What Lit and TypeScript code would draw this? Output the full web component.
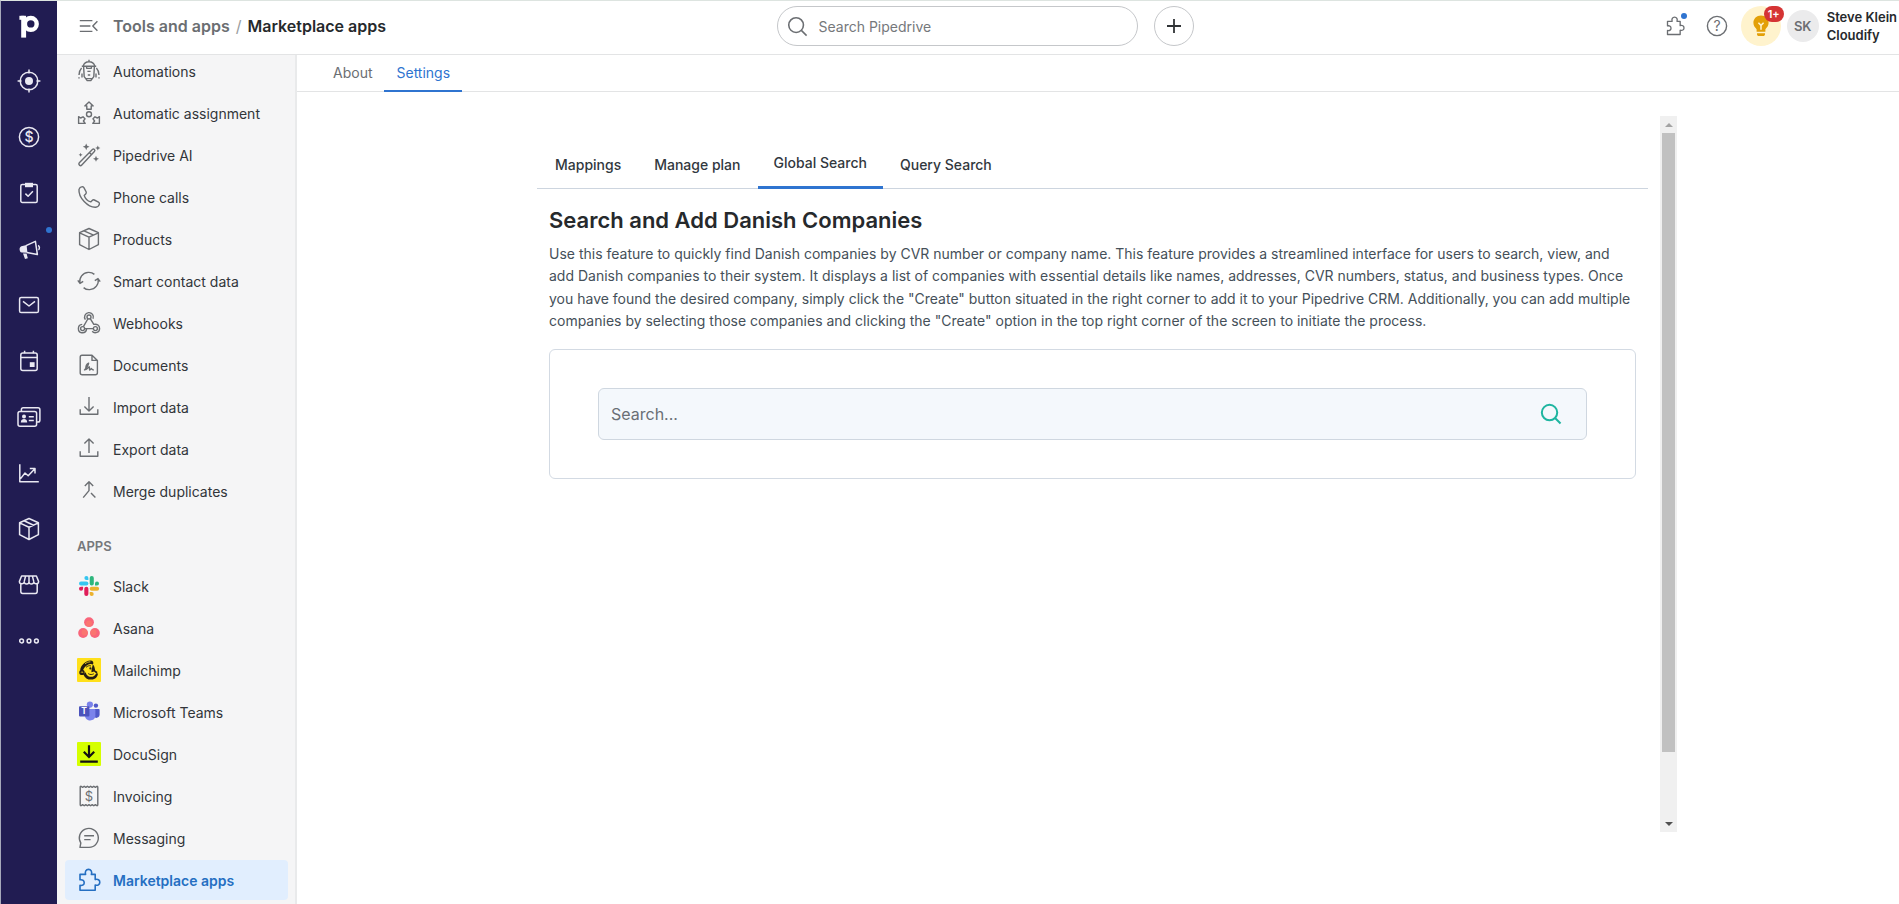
import { LitElement, html, svg, css, SVGTemplateResult } from "lit";
import { customElement, property } from "lit/decorators.js";
import { classMap } from "lit/directives/class-map.js";

const icons: Record<string, SVGTemplateResult> = {
  // left rail
  logo: svg`<rect x="4.200" y=".8" width="4.900" height="21.800"/><rect x="2.400" y=".8" width="5" height="4"/>
    <circle cx="13.800" cy="8.900" r="5.900" fill="none" stroke="currentColor" stroke-width="4.400"/>`,
  target: svg`<g class="s"><circle cx="12" cy="12" r="8.800"/><path d="M12 .6v4M12 19.400v4M.6 12h4M19.400 12h4"/></g><circle cx="12" cy="12" r="4"/>`,
  deal: svg`<circle class="s" cx="12" cy="12" r="9.600"/><text x="12" y="17" font-size="14" font-weight="500" text-anchor="middle">$</text>`,
  clipboard: svg`<g class="s"><rect x="3.800" y="3.400" width="16.400" height="18" rx="1.500"/><path d="M8.400 12.600l2.700 2.600 4.800-5"/></g><path d="M8 1.800h8v4.400H8z"/>`,
  megaphone: svg`<g class="s"><path d="M9 8.600L18.400 4.400l2 13.200L9.800 15.600"/><path d="M21 8.400c1.600.4 2 3.600.4 4.400"/></g><path d="M9.600 8L4.400 9.200C1.800 10 2 15 4.800 15.600l5.600.2zM6 16.400l3.600.2 1.200 4.600-2.800.8z"/>`,
  mail: svg`<g class="s"><rect x="2.600" y="4.400" width="18.800" height="15.200" rx="1.600"/><path d="M6 8.400l6 4.600 6-4.600"/></g>`,
  calendar: svg`<g class="s"><rect x="3.800" y="4" width="16.400" height="17.400" rx="2"/><path d="M4 8.600h16M7.600 1.800v2.400M16.400 1.800v2.400"/></g><rect x="12.800" y="13.200" width="4.800" height="4.800"/>`,
  contacts: svg`<g class="s"><rect x="1" y="6.400" width="18.600" height="14.800" rx="2"/><path d="M4.400 6V4.600c0-1.200.6-1.800 1.800-1.800H21c1.200 0 1.900.7 1.900 1.900v10.600c0 1.200-.7 1.800-1.900 1.800h-1M11.800 11.800h5M11.800 15.400h5"/></g><circle cx="7" cy="11.400" r="2"/><path d="M3.800 17.400c0-4.400 6.400-4.400 6.400 0z"/>`,
  chart: svg`<g class="s"><path d="M2.800 3.200v17.600h19M3.600 17.600l4.400-5.600 3.200 2.800 6.400-6.800M12.800 7.600h5.200v5"/></g>`,
  cube: svg`<g class="s"><path d="M12 1.500l9.400 4.200v12L12 22.500 2.600 17.700v-12zM2.600 5.900l9.400 4.300 9.400-4.300M12 10.200v12.300M7 3.800l9.600 4.400"/></g>`,
  store: svg`<g class="s"><path d="M4.600 3h14.800l2.200 5.400c0 3.200-4.600 3.200-4.800.4-.2 3-4.800 3-4.800 0 0 3-4.600 3-4.800 0-.2 2.800-4.800 2.800-4.800-.4zM3.800 11.200v7.400c0 1 .8 1.800 1.800 1.800h12.800c1 0 1.800-.8 1.800-1.800v-7.400M7.200 8.600L8.600 3M12 8.600V3M16.800 8.600L15.400 3"/></g>`,
  more: svg`<g class="s"><circle cx="4.600" cy="12" r="1.900"/><circle cx="12" cy="12" r="1.900"/><circle cx="19.400" cy="12" r="1.900"/></g>`,
  // settings menu
  robot: svg`<g class="s"><path d="M4.800 7.200h14.400M6.200 7C7 4.200 9 2.800 12 2.800S17 4.200 17.800 7M12 .8v2M6.600 7.400l.6 10.200 3 4h3.600l3-4 .6-10.200M9.400 7.400l.4 2h4.400l.4-2M10.400 12.400h3.200M10.800 16h2.400M9 19.600h6M4.600 9c-1.600 1.600-2.400 4-2.600 7M19.400 9c1.600 1.600 2.400 4 2.600 7M2 18.200v1.200M22 18.200v1.200M5 14.400v4M19 14.400v4"/></g>`,
  assign: svg`<g class="s"><circle cx="12" cy="13.200" r="2.500"/><path d="M12 .9l4.200 4h-2v3.300H9.800V4.900h-2zM1.600 15.600l2 1.400 2.400-1.200 2 2-1.600 2.200 1.800 2.400H1.600zM22.400 15.600l-2 1.400-2.400-1.200-2 2 1.600 2.200-1.800 2.400h6.600z"/></g>`,
  wand: svg`<g class="s"><path d="M15.400 6.600a1.400 1.400 0 0 1 2 2L4.800 22a1.600 1.600 0 0 1-2.500-2.200zM12.400 9.600l2.200 2.200"/></g><path d="M9.200.4l1 2.400 2.400 1-2.400 1-1 2.400-1-2.400-2.400-1 2.400-1zM20.800 2.400l.8 1.800 1.800.8-1.800.8-.8 1.800-.8-1.800-1.800-.8 1.800-.8zM19 12.800l.9 2.100 2.100.9-2.100.9-.9 2.100-.9-2.100-2.100-.9 2.100-.9zM3.600 9.800l.6 1.400 1.400.6-1.400.6-.6 1.400-.6-1.400-1.400-.6 1.400-.6z"/>`,
  phone: svg`<path class="s" d="M2 4.400c.4-1.600 1.800-2.600 3.300-2.800.8 0 1.200.4 1.600 1l2.200 4.200c.4.800.2 1.500-.4 2.100l-1.500 1.500c.8 2.800 3.700 5.700 6.500 6.500l1.500-1.500c.6-.6 1.300-.8 2.100-.4l4.200 2.200c.7.4 1.100 1 .9 1.900-.5 1.700-1.900 3-3.700 3.200C11 22.700 1.200 12.600 2 4.400z"/>`,
  refresh: svg`<g class="s"><path d="M2.800 14.200c-.8-5.600 2.800-10.400 8.400-10.800 2.600-.2 4.600.6 6.200 2M.8 11.400l2.200 3 3.200-2M21.200 9.800c.8 5.600-2.800 10.400-8.400 10.800-2.600.2-4.600-.6-6.200-2M23.200 12.600l-2.200-3-3.200 2"/></g>`,
  webhook: svg`<g class="s"><circle cx="12" cy="6" r="2"/><circle cx="5.600" cy="17.600" r="2"/><circle cx="18.400" cy="17.600" r="2"/><path d="M8.400 8.600A4.400 4.400 0 1 1 16 7.800M10.800 8L6.400 15.600M13.400 7.800l3.400 5.600c3.400-.8 5.800 1.200 5.800 4 0 4-5 5.800-7.400 2.800M16 17.600H7.800M5.200 13.400c-5 .4-5 7.600-.4 8.300 2.400.3 4.300-1 4.800-3.700"/></g>`,
  document: svg`<g class="s"><path d="M5 2.200h10l5.400 5.200v12.400c0 1.200-.8 2-2 2H5.200c-1.200 0-2-.8-2-2V4.200c0-1.200.6-2 1.800-2zM15 2.400v5h5.200M7.200 17.400c2.400-2.600 4-4.400 4.400-7.200-1.800.8-3 3.400-2.800 6.400 1.400-.4 2.200-1.800 3.400-2.800.6 1 .2 2 .4 3.200.8-.2 1.200-.8 1.800-1.400.6.800 1.200 1.400 2.400 1.400"/></g>`,
  import: svg`<path class="s" d="M12 2v14M7.400 11.600L12 16l4.600-4.400M3.200 14.200v5h17.600v-5"/>`,
  export: svg`<path class="s" d="M12 16V2M7.400 6.400L12 2l4.600 4.400M3.200 14.200v5h17.600v-5"/>`,
  merge: svg`<path class="s" d="M12 3v8.600l-5.800 7M7.800 7L12 2.800 16.200 7M14 14l4.400 4.600"/>`,
  invoice: svg`<path class="s" d="M4 2.200l1.600 1.200L7.200 2.200l1.600 1.200 1.600-1.200L12 3.400l1.600-1.200 1.600 1.200 1.600-1.200 1.600 1.200L20 2.200c.6 0 .8.400.8 1v17.600c0 .6-.2 1-.8 1l-1.600-1.200-1.600 1.200-1.600-1.200-1.600 1.200-1.600-1.200-1.600 1.200-1.600-1.200-1.600 1.200-1.600-1.200L4 21.800c-.6 0-.8-.4-.8-1V3.200c0-.6.2-1 .8-1z"/><text x="12" y="16.600" font-size="13" text-anchor="middle">$</text>`,
  message: svg`<path class="s" d="M3 21.400l.8-4.400A9.500 9.500 0 1 1 12 21.400zM7.200 9.800h9.800M7.200 13.600h6.400"/>`,
  puzzle: svg`<path class="s" d="M3 6.400h5.600c-.9-2.600.4-5 2.900-5s3.800 2.400 2.900 5h3.800v5.200c2.600-.9 4.600.4 4.600 2.700s-2 3.600-4.600 2.700v5.200H3v-4.800c2.800.4 4.200-.8 4.200-2.700S5.800 11.400 3 11.800z"/>`,
  slack: svg`<g fill="#36c5f0"><path d="M9.400 2a2 2 0 1 0 0 4.100h2V4a2 2 0 0 0-2-2z"/><rect x="2" y="7.400" width="9.400" height="4.100" rx="2"/></g>
    <g fill="#2eb67d"><rect x="12.700" y="2" width="4.100" height="9.500" rx="2"/><path d="M22 9.400a2 2 0 1 0-4 0v2.100h2a2 2 0 0 0 2-2.100z"/></g>
    <g fill="#ecb22e"><rect x="12.700" y="12.700" width="9.400" height="4.100" rx="2"/><path d="M12.700 18v2.100a2 2 0 1 0 2-2.100z"/></g>
    <g fill="#e01e5a"><rect x="7.300" y="12.700" width="4.100" height="9.400" rx="2"/><path d="M2 14.800a2 2 0 1 0 4.100 0v-2.100H4a2 2 0 0 0-2 2.100z"/></g>`,
  asana: svg`<g fill="#f9657a"><circle cx="12" cy="6.200" r="4.900"/><circle cx="6.100" cy="17" r="4.900"/><circle cx="17.900" cy="17" r="4.900"/></g>
    <g fill="#fb7d6c" opacity=".7"><circle cx="12" cy="7.400" r="3"/><circle cx="7.500" cy="16.600" r="3"/><circle cx="16.500" cy="16.600" r="3"/></g>`,
  mailchimp: svg`<rect width="24" height="24" rx="1" fill="#ffe01b"/>
    <g fill="#241c15"><path d="M3.200 12.200C3.400 7.600 8.400 2.600 13.400 2.400c2.600 0 3.600 1.800 2.600 4.200-1.600-1-3.800-.8-5.600.4-2.400 1.400-4.200 3.600-4.600 6.400z"/><circle cx="5" cy="14.400" r="2.700"/><path d="M6.400 16.400c1.400 3.600 4.600 5.400 8 5.200 4-.2 6.400-3.200 6.600-6.200l-1.800-.2c-1.200 3-4.400 4.400-7.400 3.200-2.200-1-2.800-2.800-3.200-4.200z"/><path d="M15.800 6.400c2 1.600 1.800 3.600 2.400 6l2.400 1.600-1.200 1.400-2.400-1.800-2.600.6.200-2.600z"/><circle cx="13.400" cy="10.400" r="1.100"/></g>
    <path d="M4.200 14.600c.2-1.200 1.600-1.200 1.600.2M8 5.800c1.600-1.200 3.400-2 5.400-2M10.600 15.400c1.600 1.800 4.800 1.800 6.600.6" fill="none" stroke="#ffe01b" stroke-width=".8"/><path d="M9 9.400c1.200-1.400 3.400-2.200 5-1.400M11.200 15.600c2 1.400 4 1 5.600.2" fill="none" stroke="#241c15" stroke-width=".9"/>`,
  teams: svg`<circle cx="18.900" cy="5.600" r="2.200" fill="#5059c9"/><path d="M16 9h5.600c.6 0 1 .4 1 1v4.600c0 4.400-6.600 4.400-6.600 0z" fill="#5059c9"/><circle cx="12.900" cy="4.600" r="3.100" fill="#7b83eb"/><path d="M8 9h9.400c.6 0 1 .4 1 1v5.600c0 6.400-10.400 6.600-10.400-.2z" fill="#7b83eb"/><rect x="2" y="6.200" width="10.400" height="10.400" rx="1" fill="#4b53bc"/><text x="7.200" y="14.400" font-size="8.500" font-weight="700" text-anchor="middle" fill="#fff">T</text>`,
  docusign: svg`<rect width="24" height="24" rx="1" fill="#d5ff00"/><path d="M12 3.200v11M6.800 9.800l5.200 5.200 5.200-5.200M3.200 19.600h17.600" fill="none" stroke="#111" stroke-width="2.200"/>`,
  // header
  collapse: svg`<path class="s" d="M2.800 6.600h12.600M2.800 12h10.600M2.800 17.400h12.600M20.400 7.200L15.800 12l4.600 4.800"/>`,
  search: svg`<g class="s"><circle cx="10.400" cy="10.400" r="8.400"/><path d="M16.400 16.400l6 6"/></g>`,
  plus: svg`<path class="s" d="M12 5v14M5 12h14"/>`,
  help: svg`<circle class="s" cx="12" cy="12" r="9.600"/><text x="12" y="17" font-size="14" text-anchor="middle">?</text>`,
  bulb: svg`<path d="M12 1.600c-4.400 0-7.600 3.200-7.600 7.200 0 3 1.600 4.600 3.200 6.400v2.600h8.800v-2.600c1.600-1.800 3.200-3.400 3.200-6.400 0-4-3.200-7.200-7.600-7.200zM8 19.200h8v1c0 1-.8 1.800-1.800 1.800H9.800c-1 0-1.800-.8-1.800-1.800z"/><path d="M9.400 8.800L12 11.400l2.600-2.600M12 11.400v4.400" fill="none" stroke="#fff3cd" stroke-width="1.500"/>`,
};

@customElement("ui-icon")
class UiIcon extends LitElement {
  @property() name = "";
  static styles = css`
    :host { display: block; width: 24px; height: 24px; flex: none; }
    svg { display: block; width: 100%; height: 100%; fill: currentColor; font-family: Inter, sans-serif; overflow: visible; }
    .s { fill: none; stroke: currentColor; stroke-width: var(--icon-stroke, 1.4); stroke-linejoin: round; }
  `;
  render() {
    return html`<svg viewBox="0 0 24 24" aria-hidden="true">${icons[this.name]}</svg>`;
  }
}

const rail = [
  ["target", "Leads"], ["deal", "Deals"], ["clipboard", "Projects"], ["megaphone", "Campaigns"],
  ["mail", "Mail"], ["calendar", "Activities"], ["contacts", "Contacts"], ["chart", "Insights"],
  ["cube", "Products"], ["store", "Marketplace"], ["more", "More"],
];
const tools = [
  ["robot", "Automations"], ["assign", "Automatic assignment"], ["wand", "Pipedrive AI"],
  ["phone", "Phone calls"], ["cube", "Products"], ["refresh", "Smart contact data"],
  ["webhook", "Webhooks"], ["document", "Documents"], ["import", "Import data"],
  ["export", "Export data"], ["merge", "Merge duplicates"],
];
const apps = [
  ["slack", "Slack"], ["asana", "Asana"], ["mailchimp", "Mailchimp"], ["teams", "Microsoft Teams"],
  ["docusign", "DocuSign"], ["invoice", "Invoicing"], ["message", "Messaging"], ["puzzle", "Marketplace apps"],
];

@customElement("nav-rail")
class NavRail extends LitElement {
  static styles = css`
    :host { display: block; width: 56px; flex: none; background: #211c52; color: #fff; --icon-stroke: 1.5; }
    nav { display: flex; flex-direction: column; align-items: center; }
    a { display: flex; width: 56px; height: 56px; align-items: center; justify-content: center; color: #e9e8f2; position: relative; }
    a.logo { height: 52px; color: #fff; }
    .dot { position: absolute; top: 6px; right: 5px; width: 6px; height: 6px; border-radius: 50%; background: #2f74d0; }
  `;
  render() {
    return html`<nav aria-label="Main">
      <a class="logo" href="#home" aria-label="Home"><ui-icon name="logo"></ui-icon></a>
      ${rail.map(([icon, label]) => html`<a href="#${icon}" aria-label=${label}>
        <ui-icon name=${icon}></ui-icon>${icon === "megaphone" ? html`<span class="dot"></span>` : ""}</a>`)}
    </nav>`;
  }
}

@customElement("top-bar")
class TopBar extends LitElement {
  static styles = css`
    :host { display: block; flex: none; border-bottom: 1px solid #e3e4e5; background: #fff; }
    header { display: grid; grid-template-columns: 1fr auto 1fr; align-items: center; height: 53px; padding: 0 2px 3px 16px; box-sizing: border-box; }
    button { border: 0; background: none; padding: 0; font: inherit; color: #6b6e72; display: flex; align-items: center; justify-content: center; }
    .left, .mid, .right { display: flex; align-items: center; }
    .left { padding-left: 4px; gap: 12px; font-size: 16px; font-weight: 600; white-space: nowrap; }
    .crumbs { display: flex; gap: 6px; }
    .crumbs a { color: #6b6e72; text-decoration: none; }
    .slash { color: #9a9da0; font-weight: 400; }
    .here { color: #26292c; }
    .mid { gap: 16px; }
    .search { display: flex; align-items: center; gap: 11px; width: 361px; height: 40px; box-sizing: border-box; padding: 0 9px; border: 1px solid #c5c7ca; border-radius: 20px; color: #6b6e72; }
    .search ui-icon { width: 21px; height: 21px; --icon-stroke: 1.8; }
    input { flex: 1; min-width: 0; border: 0; outline: 0; padding: 0; background: none; font: 14px Inter, sans-serif; }
    input::placeholder { color: #75787b; opacity: 1; }
    .add { width: 40px; height: 40px; border: 1px solid #c5c7ca; border-radius: 50%; color: #303336; --icon-stroke: 1.8; }
    .right { justify-content: flex-end; }
    .tool { position: relative; margin-right: 18px; }
    .tool ui-icon { width: 20px; height: 20px; margin: 2px; --icon-stroke: 1.6; }
    .dot { position: absolute; top: -1px; right: 0; width: 6px; height: 6px; border-radius: 50%; background: #2f74d0; }
    .help { margin-right: 12px; }
    .tips { position: relative; width: 40px; height: 40px; border-radius: 50%; background: #fff3cd; color: #e3a008; margin-right: 6px; }
    .badge { position: absolute; top: 0; right: -3px; padding: 0 4px; border-radius: 8px; background: #d53434; color: #fff; font-size: 11px; line-height: 16px; font-weight: 600; }
    .avatar { width: 32px; height: 32px; border-radius: 50%; background: #ebebec; color: #6b6e72; font-size: 13px; font-weight: 600; margin-right: 8px; }
    .who { font-size: 13px; line-height: 18px; font-weight: 600; color: #26292c; white-space: nowrap; }
  `;
  render() {
    return html`<header>
      <div class="left">
        <button aria-label="Collapse menu"><ui-icon name="collapse"></ui-icon></button>
        <div class="crumbs"><a href="#tools">Tools and apps</a><span class="slash">/</span><span class="here">Marketplace apps</span></div>
      </div>
      <div class="mid">
        <label class="search"><ui-icon name="search"></ui-icon><input type="text" aria-label="Search Pipedrive" placeholder="Search Pipedrive" /></label>
        <button class="add" aria-label="Add"><ui-icon name="plus"></ui-icon></button>
      </div>
      <div class="right">
        <button class="tool" aria-label="Apps"><ui-icon name="puzzle"></ui-icon><span class="dot"></span></button>
        <button class="help" aria-label="Help"><ui-icon name="help"></ui-icon></button>
        <button class="tips" aria-label="Tips"><ui-icon name="bulb"></ui-icon><span class="badge">1+</span></button>
        <button class="avatar" aria-label="Account">SK</button>
        <div class="who"><div>Steve Klein</div><div>Cloudify</div></div>
      </div>
    </header>`;
  }
}

@customElement("side-menu")
class SideMenu extends LitElement {
  static styles = css`
    :host { display: flex; flex-direction: column; justify-content: flex-end; width: 240px; box-sizing: border-box; flex: none; overflow: hidden; background: #f5f5f6; border-right: 2px solid #e9eaeb; padding: 0 7px 4px 8px; }
    nav { display: flex; flex-direction: column; gap: 2px; flex: none; }
    a { display: flex; align-items: center; gap: 12px; height: 40px; padding: 0 12px; border-radius: 4px; font-size: 14px; color: #32353a; text-decoration: none; white-space: nowrap; }
    ui-icon { color: #6b6e72; }
    a.on { background: #e1eefe; color: #256fc2; font-weight: 600; }
    a.on ui-icon { color: #256fc2; --icon-stroke: 1.6; }
    h2 { margin: 0; padding: 26px 12px 11px; font-size: 13px; line-height: 18px; font-weight: 600; color: #75787b; }
  `;
  item([icon, label]: string[]) {
    return html`<a href="#${icon}" class=${classMap({ on: icon === "puzzle" })}><ui-icon name=${icon}></ui-icon>${label}</a>`;
  }
  render() {
    return html`<nav aria-label="Tools and apps">${tools.map((t) => this.item(t))}</nav>
      <h2>APPS</h2>
      <nav aria-label="Apps">${apps.map((t) => this.item(t))}</nav>`;
  }
}

@customElement("app-frame")
class AppFrame extends LitElement {
  static styles = css`
    :host { display: flex; width: 100%; max-width: 1158px; }
    .body { flex: 1; min-width: 0; padding: 24px 12px 0 18px; }
    .tabs { display: flex; gap: 1px; border-bottom: 1px solid #cdd5df; padding-left: 2px; }
    .tabs button { border: 0; background: none; height: 48px; padding: 0 16px; font: 500 14px/50px Inter, sans-serif; color: #32383e; }
    .tabs button.on { border-bottom: 3px solid #2f74d0; margin-bottom: -1px; height: 49px; line-height: 44px; }
    .page { padding: 0 12px; }
    h1 { margin: 17px 0 9px; font-size: 22px; line-height: 28px; font-weight: 600; color: #26292c; }
    p { margin: 0 0 16px; font-size: 14px; line-height: 1.6; color: #455059; }
    .card { border: 1px solid #d3dae3; border-radius: 6px; padding: 38px 48px; }
    .field { display: flex; align-items: center; height: 52px; box-sizing: border-box; border: 1px solid #cfd7e0; border-radius: 6px; background: #f4f8fc; padding: 0 24px 0 12px; }
    input { flex: 1; min-width: 0; border: 0; outline: 0; padding: 0; background: none; font: 16px Inter, sans-serif; }
    input::placeholder { color: #6a6f75; opacity: 1; }
    .field button { border: 0; background: none; padding: 0; color: #1eb5a0; }
    .field ui-icon { width: 22px; height: 22px; --icon-stroke: 2.2; }
    .bar { display: flex; flex-direction: column; align-items: center; justify-content: space-between; width: 17px; background: #f0f0f0; }
    .thumb { flex: 1; width: 13px; background: #c1c1c1; }
    .track { flex: 0 0 63px; }
    .arrow { display: flex; align-items: center; justify-content: center; height: 17px; }
    .arrow::before { content: ""; border: 4px solid transparent; border-top-width: 0; border-bottom-color: #a3a3a3; }
    .arrow.down::before { border-width: 4px 4px 0; border-top-color: #505050; }
  `;
  render() {
    return html`<div class="body">
        <div class="tabs" role="tablist">
          ${["Mappings", "Manage plan", "Global Search", "Query Search"].map((t) => html`<button role="tab" class=${classMap({ on: t === "Global Search" })}>${t}</button>`)}
        </div>
        <div class="page">
          <h1>Search and Add Danish Companies</h1>
          <p>Use this feature to quickly find Danish companies by CVR number or company name. This feature provides a streamlined interface for users to search, view, and add Danish companies to their system. It displays a list of companies with essential details like names, addresses, CVR numbers, status, and business types. Once you have found the desired company, simply click the "Create" button situated in the right corner to add it to your Pipedrive CRM. Additionally, you can add multiple companies by selecting those companies and clicking the "Create" option in the top right corner of the screen to initiate the process.</p>
          <div class="card"><div class="field">
            <input type="text" aria-label="Search companies" placeholder="Search..." />
            <button aria-label="Search"><ui-icon name="search"></ui-icon></button>
          </div></div>
        </div>
      </div>
      <div class="bar" aria-hidden="true"><div class="arrow"></div><div class="thumb"></div><div class="track"></div><div class="arrow down"></div></div>`;
  }
}

@customElement("app-root")
class AppRoot extends LitElement {
  static styles = css`
    :host { display: flex; height: 100vh; box-sizing: border-box; border-top: 1px solid #dde4e0; border-left: 1px solid #a6a8ba; background: #fff; font-family: Inter, sans-serif; overflow: hidden; }
    .shell { flex: 1; min-width: 0; display: flex; flex-direction: column; }
    .row { flex: 1; min-height: 0; display: flex; }
    main { flex: 1; min-width: 0; display: flex; flex-direction: column; }
    .tabs { display: flex; flex: none; border-bottom: 1px solid #e3e4e5; padding-left: 24px; }
    .tabs a { padding: 0 12px; height: 35px; line-height: 35px; font-size: 14px; color: #6b6e72; text-decoration: none; border-bottom: 2px solid transparent; margin-bottom: -1px; }
    .tabs a.on { color: #2f74d0; border-color: #2f74d0; }
    .stage { flex: 1; min-height: 0; display: flex; justify-content: center; padding: 24px 24px 72px; }
  `;
  render() {
    return html`<nav-rail></nav-rail>
      <div class="shell"><top-bar></top-bar>
        <div class="row"><side-menu></side-menu>
          <main>
            <nav class="tabs"><a href="#about">About</a><a class="on" href="#settings">Settings</a></nav>
            <div class="stage"><app-frame></app-frame></div>
          </main>
        </div>
      </div>`;
  }
}
